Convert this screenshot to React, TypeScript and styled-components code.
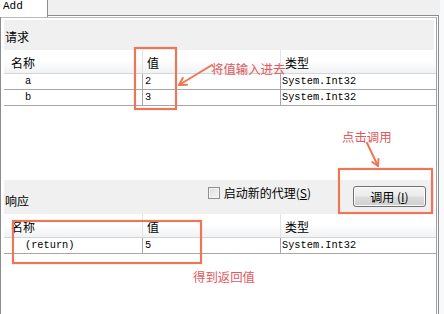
import React from "react";
import styled, { createGlobalStyle } from "styled-components";

const GlobalStyle = createGlobalStyle`
  html, body {
    margin: 0;
    padding: 0;
    background: #ffffff;
  }
`;

const cjk = `"Noto Sans CJK SC", "DejaVu Sans", sans-serif`;
const mono = `"Liberation Mono", "DejaVu Sans Mono", monospace`;
const markColor = "#ee7555";
const noteColor = "#e2585c";

const Stage = styled.div`
  position: relative;
  width: 444px;
  height: 314px;
  overflow: hidden;
  background: #f7f9fb;
  font-family: ${cjk};
  font-size: 12px;
  color: #000;
`;

const TabStrip = styled.div`
  display: flex;
  height: 15px;
  width: 440px;
  background: #f0f0f0;
`;

const Tab = styled.div`
  position: relative;
  z-index: 1;
  box-sizing: border-box;
  width: 48px;
  height: 17px;
  padding-left: 3px;
  background: #ffffff;
  border-right: 1px solid #8c8c8c;
  font-family: ${mono};
  font-size: 11px;
  line-height: 13px;
`;

const Panel = styled.div`
  box-sizing: border-box;
  width: 439px;
  height: 299px;
  border: 1px solid #8c8c8c;
  border-bottom: none;
  padding: 1px 1px 0 0;
  background: #ffffff;
`;

const Frame = styled.div`
  box-sizing: border-box;
  height: 100%;
  display: flex;
  flex-direction: column;
  border-top: 1px solid #b9b9b9;
  border-right: 1px solid #a0a0a0;
  padding: 2px 0 0 3px;
  background: #ffffff;
`;

const Band = styled.div<{ $height: number }>`
  box-sizing: border-box;
  height: ${(p) => p.$height}px;
  margin-right: 2px;
  display: flex;
  align-items: flex-end;
  justify-content: space-between;
  padding: 0 8px 6px 1px;
  background: #f0f0f0;
  line-height: 14px;
`;

const BandTitle = styled.span`
  font-size: 12px;
`;

const Controls = styled.div`
  display: flex;
  align-items: flex-start;
  align-self: flex-start;
  margin-top: 6px;
`;

const Check = styled.span`
  box-sizing: border-box;
  width: 12px;
  height: 12px;
  margin-top: 1px;
  margin-right: 4px;
  border: 1px solid #8e8f8f;
  background: linear-gradient(135deg, #dcdcdc, #f6f6f6);
  box-shadow: inset 0 0 0 1px #f4f4f4;
`;

const CheckLabel = styled.span`
  line-height: 14px;
  margin-right: 42px;
`;

const Button = styled.div`
  box-sizing: border-box;
  width: 73px;
  height: 21px;
  display: flex;
  align-items: center;
  justify-content: center;
  border: 1px solid #707070;
  border-radius: 3px;
  background: linear-gradient(#f4f4f4 0%, #ebebeb 48%, #dddddd 52%, #cfcfcf 100%);
  box-shadow: inset 0 0 0 1px #fbfbfb;
  line-height: 14px;
`;

const TableArea = styled.div<{ $height?: number }>`
  ${(p) => (p.$height ? `height: ${p.$height}px;` : "flex: 1;")}
  background: #ffffff;
`;

const Grid = styled.div`
  display: grid;
  grid-template-columns: 138px 138px 1fr;
`;

const HeadCell = styled.div<{ $first?: boolean }>`
  box-sizing: border-box;
  height: 24px;
  padding: 6px 0 0 ${(p) => (p.$first ? 7 : 4)}px;
  line-height: 14px;
  background: linear-gradient(#ffffff 0%, #ffffff 45%, #f1f2f4 100%);
  border-bottom: 1px solid #d5d5d5;
  border-left: ${(p) => (p.$first ? "none" : "1px solid #e3e3e3")};
`;

const Cell = styled.div<{ $first?: boolean; $indent?: number }>`
  box-sizing: border-box;
  height: 16px;
  padding-left: ${(p) => p.$indent ?? 2}px;
  font-family: ${mono};
  font-size: 10.3px;
  line-height: 15px;
  border-bottom: 1px solid #a7a7a7;
  border-left: ${(p) => (p.$first ? "none" : "1px solid #a7a7a7")};
  white-space: nowrap;
`;

const Mark = styled.div<{ $x: number; $y: number; $w: number; $h: number }>`
  position: absolute;
  left: ${(p) => p.$x}px;
  top: ${(p) => p.$y}px;
  width: ${(p) => p.$w}px;
  height: ${(p) => p.$h}px;
  box-sizing: border-box;
  border: 2px solid ${markColor};
  box-shadow: 0 0 1px rgba(238, 117, 85, 0.6), inset 0 0 1px rgba(238, 117, 85, 0.6);
  pointer-events: none;
`;

const Note = styled.span<{ $x: number; $y: number }>`
  position: absolute;
  left: ${(p) => p.$x}px;
  top: ${(p) => p.$y}px;
  color: ${noteColor};
  font-size: 12.4px;
  line-height: 14px;
  white-space: nowrap;
`;

const Arrows = styled.svg`
  position: absolute;
  left: 0;
  top: 0;
  pointer-events: none;
`;

type Row = { name: string; value: string; type: string };

const requestRows: Row[] = [
  { name: "a", value: "2", type: "System.Int32" },
  { name: "b", value: "3", type: "System.Int32" },
];

const responseRows: Row[] = [{ name: "(return)", value: "5", type: "System.Int32" }];

function ParamTable({ rows }: { rows: Row[] }) {
  return (
    <Grid>
      <HeadCell $first>名称</HeadCell>
      <HeadCell>值</HeadCell>
      <HeadCell>类型</HeadCell>
      {rows.map((r) => (
        <React.Fragment key={r.name}>
          <Cell $first $indent={21}>
            {r.name}
          </Cell>
          <Cell>{r.value}</Cell>
          <Cell $indent={1}>{r.type}</Cell>
        </React.Fragment>
      ))}
    </Grid>
  );
}

export default function App() {
  return (
    <>
      <GlobalStyle />
      <Stage>
        <TabStrip>
          <Tab>Add</Tab>
        </TabStrip>
        <Panel>
          <Frame>
            <Band $height={30}>
              <BandTitle>请求</BandTitle>
            </Band>
            <TableArea $height={130}>
              <ParamTable rows={requestRows} />
            </TableArea>
            <Band $height={34}>
              <BandTitle>响应</BandTitle>
              <Controls>
                <Check />
                <CheckLabel>
                  启动新的代理(<u>S</u>)
                </CheckLabel>
                <Button>
                  调用 (<u>I</u>)
                </Button>
              </Controls>
            </Band>
            <TableArea>
              <ParamTable rows={responseRows} />
            </TableArea>
          </Frame>
        </Panel>

        <Mark $x={134} $y={47} $w={43} $h={63} />
        <Mark $x={338} $y={168} $w={95} $h={46} />
        <Mark $x={12} $y={220} $w={190} $h={44} />

        <Note $x={211} $y={62}>将值输入进去</Note>
        <Note $x={342} $y={130}>点击调用</Note>
        <Note $x={193} $y={270}>得到返回值</Note>

        <Arrows width={444} height={314} viewBox="0 0 444 314">
          <g stroke={markColor} strokeWidth={2} fill="none" strokeLinecap="round" strokeLinejoin="round">
            <line x1={212} y1={65} x2={179} y2={85} />
            <polyline points="187,84.8 179,85 182.8,78" />
            <line x1={367} y1={143} x2={378} y2={166} />
            <polyline points="378.5,159 378,166 372.2,162" />
          </g>
        </Arrows>
      </Stage>
    </>
  );
}
